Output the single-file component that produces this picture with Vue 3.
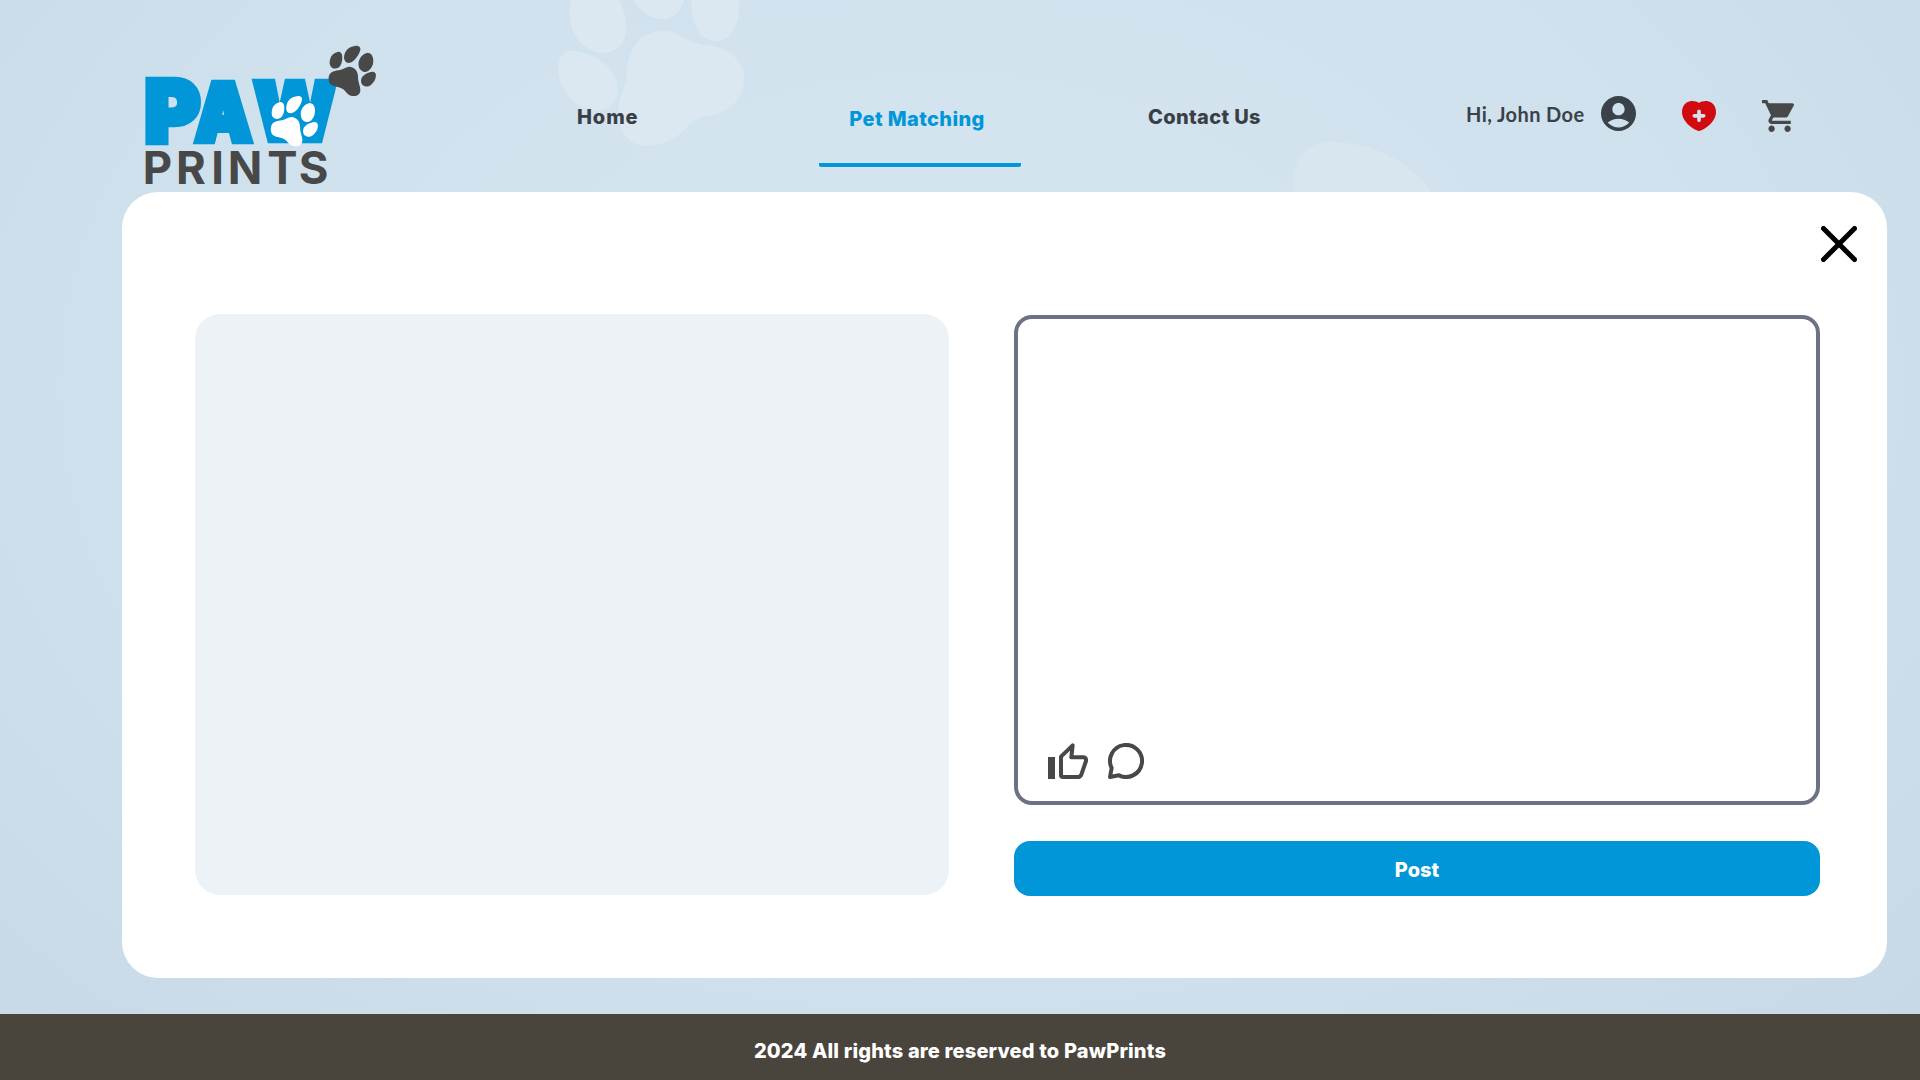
<script setup>
const links = [
  { label: 'Home', cls: 'home', active: false },
  { label: 'Pet Matching', cls: 'matching', active: true },
  { label: 'Contact Us', cls: 'contact', active: false },
]
</script>

<template>
  <div class="page">
    <svg class="watermark" width="1920" height="192" viewBox="0 0 1920 192" aria-hidden="true">
      <g transform="translate(530 0) scale(.33333)">
        <path d="M128 -20C112 25 116 90 150 125C187 164 238 170 269 138C302 104 290 37 258 -20Z" />
        <path d="M300 -25C319 28 355 57 400 57C442 55 462 20 466 -25Z" />
        <path d="M486 -20C477 54 500 118 552 123C608 128 634 68 626 -20Z" />
        <path d="M120 153C87 154 82 196 88 232C97 281 137 325 190 330C235 334 261 310 264 276C264 226 237 191 185 167C162 157 139 152 120 153Z" />
        <path d="M400 92C335 94 293 143 291 211C290 258 268 286 265 323C262 397 297 438 354 437C414 435 448 405 475 378C508 342 537 352 575 336C619 317 642 277 642 235C641 193 613 158 569 143C541 134 510 140 464 114C441 100 423 92 400 92Z" />
      </g>
      <path d="M1294 193C1291 160 1303 142 1334 142C1374 143 1412 163 1432 193Z" class="faint" />
    </svg>

    <header class="header">
      <svg class="logo" width="280" height="162" viewBox="0 0 840 486" role="img" aria-label="Paw Prints">
        <g class="paw-word">
          <text class="letter-p" transform="translate(74 337) scale(.98 1)">P</text>
          <text transform="translate(226 332) scale(.89 1)">A</text>
          <text transform="translate(402 329) scale(.95 1)">W</text>
        </g>
        <text class="prints-word" x="68 168 274 323 442 536" y="462">PRINTS</text>
        <g class="mark-white" transform="translate(-174 151)">
          <path d="M629 97C629 78 643 66 657 65C668 67 669 83 664 101C658 115 646 119 636 113C630 109 629 104 629 97Z" />
          <path d="M673 82C673 60 689 49 708 47C720 47 722 54 719 63C714 80 700 99 684 99C676 97 672 91 673 82Z" />
          <path d="M717 108C713 91 724 71 743 68C759 69 762 90 757 105C750 123 740 128 730 124C721 121 718 115 717 108Z" />
          <path d="M723 152C723 137 740 127 759 125C772 127 768 143 763 153C752 169 744 172 733 168C726 165 723 159 723 152Z" />
          <path d="M627 140C631 122 646 123 660 120C671 118 678 109 690 110C706 112 714 125 714 140C714 158 722 169 721 182C719 196 707 201 692 196C680 193 677 181 664 175C650 169 633 170 628 157Q625 150 627 140Z" />
        </g>
        <g class="mark-dark">
          <path d="M629 97C629 78 643 66 657 65C668 67 669 83 664 101C658 115 646 119 636 113C630 109 629 104 629 97Z" />
          <path d="M672 82C673 60 689 49 708 47C720 47 723 54 720 63C714 80 700 99 684 99C676 97 672 91 672 82Z" />
          <path d="M716 108C713 91 724 71 743 68C759 69 763 90 758 105C750 123 740 128 730 125C721 121 717 115 716 108Z" />
          <path d="M723 152C723 137 740 127 759 125C772 127 768 143 763 153C752 169 744 172 733 168C726 165 723 159 723 152Z" />
          <path d="M626 140C631 122 646 123 660 120C671 118 678 109 690 110C706 112 714 125 714 140C714 158 722 169 721 182C719 196 707 201 692 197C680 193 677 181 664 175C650 169 633 170 628 157Q625 150 626 140Z" />
        </g>
      </svg>

      <nav class="nav">
        <a v-for="l in links" :key="l.label" class="link" :class="[l.cls, { active: l.active }]">{{ l.label }}</a>
      </nav>

      <div class="account">
        <span class="greeting">Hi, John Doe</span>
        <svg class="user" width="35" height="35" viewBox="2 2 20 20">
          <path d="M12 2C6.480 2 2 6.480 2 12s4.480 10 10 10 10-4.480 10-10S17.520 2 12 2zm0 4c1.930 0 3.500 1.570 3.500 3.500S13.930 13 12 13s-3.500-1.570-3.500-3.500S10.070 6 12 6zm0 14c-2.030 0-4.430-.82-6.140-2.880C7.550 15.800 9.680 15 12 15s4.450.8 6.140 2.120C16.430 19.180 14.030 20 12 20z" />
        </svg>
        <svg class="heart" width="34" height="30" viewBox="0 0 102 90">
          <path fill="#d10a10" d="M51 6C41-1 25-2 13 5C2 13-2 27 1 42C5 62 26 80 44 88Q51 92 58 88C76 80 97 62 101 42C104 27 100 13 89 5C77-2 61-1 51 6Z" />
          <path stroke="#d5e3ee" stroke-width="11" stroke-linecap="round" d="M51 31V58M37 44.500H65" />
        </svg>
        <svg class="cart" width="32" height="32" viewBox="1 2 20 20">
          <path d="M7 18c-1.100 0-1.990.9-1.990 2S5.900 22 7 22s2-.9 2-2-.9-2-2-2zM1 2v2h2l3.600 7.590-1.350 2.450c-.16.280-.25.610-.25.960 0 1.100.9 2 2 2h12v-2H7.420c-.14 0-.25-.11-.25-.25l.03-.12.9-1.630h7.450c.75 0 1.410-.41 1.750-1.030l3.580-6.490c.08-.14.12-.31.12-.48 0-.55-.45-1-1-1H5.210l-.94-2H1zm16 16c-1.100 0-1.990.9-1.990 2s.89 2 1.990 2 2-.9 2-2-.9-2-2-2z" />
        </svg>
      </div>
    </header>

    <main class="card">
      <div class="card-top">
        <svg class="close" width="36" height="36" viewBox="0 0 36 36">
          <path d="M2.500 2.500L33.500 33.500M33.500 2.500L2.500 33.500" />
        </svg>
      </div>
      <div class="columns">
        <div class="photo"></div>
        <div class="compose">
          <div class="message">
            <svg class="like" width="40" height="36" viewBox="0 0 120 108">
              <path fill="#484848" d="M0 42H21V108H0Z" />
              <path fill="none" stroke="#484848" stroke-width="12" stroke-linejoin="round" d="M39 41L74 7L70 43H107Q115 44 114 54L100 95Q96 102 89 102H45Q39 102 39 96Z" />
            </svg>
            <svg class="comment" width="36" height="36" viewBox="0 0 108 108">
              <path fill="none" stroke="#484848" stroke-width="12" stroke-linejoin="round" d="M6 102L11 75A48 48 0 1 1 33 97Z" />
            </svg>
          </div>
          <button class="post">Post</button>
        </div>
      </div>
    </main>

    <footer class="footer">2024 All rights are reserved to PawPrints</footer>
  </div>
</template>

<style>
html,
body {
  margin: 0;
}
</style>

<style scoped>
.page {
  position: relative;
  box-sizing: border-box;
  width: 1920px;
  height: 1080px;
  overflow: hidden;
  display: flex;
  flex-direction: column;
  font-family: Inter, 'Open Sans', sans-serif;
  background: radial-gradient(ellipse farthest-corner at 49% 36%, #d7e6f1 0%, #cfe1ed 58%, #c6d8e5 100%);
}
.watermark {
  position: absolute;
  top: 0;
  left: 0;
  fill: #dce8f1;
}
.faint {
  fill: #d8e6ef;
}
.header {
  position: relative;
  display: flex;
  height: 192px;
  flex: none;
}
.logo {
  display: block;
  margin: 30px 0 0 120px;
  flex: none;
  overflow: visible;
}
.paw-word {
  font-family: Inter, sans-serif;
  font-weight: 900;
  font-size: 239px;
  fill: #0096d8;
  stroke: #0096d8;
  stroke-width: 20px;
}
.letter-p {
  font-size: 257px;
}
.prints-word {
  font-family: Inter, sans-serif;
  font-weight: 700;
  font-size: 136px;
  fill: #484848;
}
.mark-white {
  fill: #fff;
}
.mark-dark {
  fill: #484848;
}
.nav {
  display: flex;
  align-items: flex-start;
  margin-left: 177px;
  width: 850px;
  flex: none;
}
.link {
  box-sizing: border-box;
  height: 75px;
  margin-top: 92px;
  font-size: 20px;
  line-height: 50px;
  font-weight: 800;
  color: #3a3f45;
  white-space: nowrap;
}
.home {
  width: 242px;
  letter-spacing: 0.9px;
}
.matching {
  width: 202px;
  padding-top: 2px;
  margin-right: 127px;
  text-align: center;
  letter-spacing: 0.4px;
}
.contact {
  letter-spacing: 0.35px;
}
.active {
  padding-right: 6px;
  color: #0096d8;
  background: linear-gradient(#0096d8, #0096d8) bottom / 100% 4px no-repeat;
  border-radius: 2px;
}
.account {
  display: flex;
  align-items: flex-start;
  flex: none;
}
.greeting {
  margin-top: 101px;
  margin-left: 39px;
  width: 135px;
  font-family: Lato, sans-serif;
  font-size: 20px;
  line-height: 26px;
  font-weight: 700;
  letter-spacing: 0.4px;
  color: #3a4149;
  white-space: nowrap;
}
.user {
  margin-top: 96px;
  fill: #3a4149;
}
.heart {
  margin: 101px 0 0 46px;
}
.cart {
  margin: 100px 0 0 46px;
  fill: #484848;
}
.card {
  position: relative;
  box-sizing: border-box;
  width: 1765px;
  height: 786px;
  margin-left: 122px;
  padding: 34px 67px 0 73px;
  border-radius: 36px;
  background: #fff;
  flex: none;
}
.card-top {
  display: flex;
  justify-content: flex-end;
  height: 88px;
  margin-right: -37px;
}
.close {
  fill: none;
  stroke: #000;
  stroke-width: 5;
  stroke-linecap: round;
}
.columns {
  display: flex;
  justify-content: space-between;
}
.photo {
  width: 754px;
  height: 581px;
  border-radius: 25px;
  background: #ecf2f6;
}
.compose {
  display: flex;
  flex-direction: column;
  width: 806px;
  padding-top: 1px;
}
.message {
  box-sizing: border-box;
  display: flex;
  align-items: flex-end;
  gap: 20px;
  height: 490px;
  padding: 0 0 22px 30px;
  border: 4px solid #6a7284;
  border-radius: 18px;
}
.post {
  height: 55px;
  margin-top: 36px;
  padding: 3px 0 0;
  border: 0;
  border-radius: 16px;
  background: #0096d8;
  color: #fff;
  font: 800 20px/52px Inter, sans-serif;
}
.footer {
  height: 66px;
  margin-top: 36px;
  padding-top: 4px;
  background: #49443c;
  color: #fff;
  font-size: 20px;
  line-height: 66px;
  font-weight: 800;
  letter-spacing: 0.17px;
  text-align: center;
}
</style>
